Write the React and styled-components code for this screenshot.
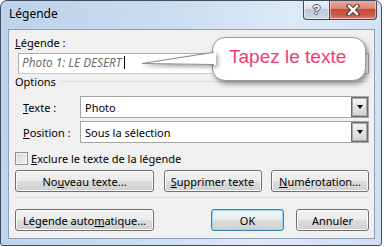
import React from "react";
import styled, { createGlobalStyle } from "styled-components";

const GlobalStyle = createGlobalStyle`
  body {
    margin: 0;
    background: #ffffff;
    font-family: "Noto Sans", "Liberation Sans", sans-serif;
  }
`;

const Window = styled.div`
  width: 382px;
  height: 246px;
  box-sizing: border-box;
  border: 1px solid #3e4d60;
  border-radius: 7px 7px 3px 3px;
  background: linear-gradient(100deg, #bcd2ec 0%, #cadcf1 40%, #dce9f7 70%, #cfe0f3 100%);
  display: flex;
  flex-direction: column;
  overflow: hidden;
`;

const TitleBar = styled.div`
  height: 28px;
  flex-shrink: 0;
  display: flex;
  justify-content: space-between;
  align-items: flex-start;
`;

const Title = styled.div`
  font-size: 12px;
  line-height: 16px;
  padding: 5px 0 0 8px;
  color: #000;
`;

const CaptionButtons = styled.div`
  display: flex;
  margin: -1px 4px 0 0;
`;

const CaptionButton = styled.div`
  width: ${(p) => p.$w}px;
  height: 20px;
  box-sizing: border-box;
  border: 1px solid #3d4a5a;
  border-top: none;
  border-left: ${(p) => (p.$close ? "none" : "1px solid #3d4a5a")};
  border-radius: ${(p) => (p.$close ? "0 0 4px 0" : "0 0 0 4px")};
  display: flex;
  align-items: center;
  justify-content: center;
  background: ${(p) =>
    p.$close
      ? "linear-gradient(#eab0a3 0%, #dc8474 45%, #c44a36 50%, #cf5f4b 85%, #e0907c 100%)"
      : "linear-gradient(#eef3f9 0%, #dae4ef 45%, #bccbdc 50%, #c9d7e6 100%)"};
  box-shadow: inset 0 0 0 1px rgba(255, 255, 255, 0.45);
`;

const HelpGlyph = styled.span`
  font-family: "Liberation Sans", sans-serif;
  font-weight: bold;
  font-size: 13px;
  line-height: 13px;
  color: #fff;
  text-shadow: 1px 0 0 #4a5565, -1px 0 0 #4a5565, 0 1px 0 #4a5565, 0 -1px 0 #4a5565;
`;

const Content = styled.div`
  flex: 1;
  margin: 0 6px 6px 7px;
  border: 1px solid #8e9fb3;
  background: #f0f0f0;
  position: relative;
  padding: 5px 5px 7px 6px;
  display: flex;
  flex-direction: column;
  font-size: 11px;
  line-height: 15px;
  color: #000;
`;

const Label = styled.div`
  height: 15px;
  margin-bottom: ${(p) => p.$mb || 0}px;
`;

const TextBox = styled.div`
  height: 21px;
  box-sizing: border-box;
  margin-left: 3px;
  border: 1px solid #abadb3;
  border-bottom-color: #c9ccd3;
  background: #fff;
  padding: 0 3px;
  display: flex;
  align-items: flex-start;
  font-style: italic;
  font-size: 11.8px;
  line-height: 16px;
  color: #6d6d6d;
`;

const Caret = styled.span`
  display: inline-block;
  width: 1px;
  height: 13px;
  margin: 2px 0 0 2px;
  background: #000;
`;

const GroupHeader = styled.div`
  height: 15px;
  display: flex;
  align-items: center;
  margin-bottom: 7px;
`;

const GroupLine = styled.div`
  flex: 1;
  height: 1px;
  margin: 0 0 0 5px;
  background: #d5dfe5;
`;

const FieldRow = styled.div`
  display: flex;
  align-items: center;
  height: 22px;
  margin: 0 0 ${(p) => p.$mb || 0}px 8px;
`;

const FieldLabel = styled.div`
  width: 57px;
`;

const Select = styled.div`
  flex: 1;
  height: 22px;
  box-sizing: border-box;
  border: 1px solid #a5a5a5;
  background: #fff;
  display: flex;
  align-items: center;
  justify-content: space-between;
  padding-left: 4px;
`;

const DropButton = styled.div`
  width: 17px;
  height: 20px;
  box-sizing: border-box;
  border: 1px solid #6d6d6d;
  box-shadow: inset 0 0 0 1px #a9a9a9;
  background: linear-gradient(#f6f6f6, #e4e4e4 50%, #d2d2d2);
  display: flex;
  align-items: center;
  justify-content: center;

  &::after {
    content: "";
    border-left: 3.5px solid transparent;
    border-right: 3.5px solid transparent;
    border-top: 4px solid #000;
    margin-top: -1px;
  }
`;

const CheckRow = styled.div`
  display: flex;
  align-items: center;
  height: 15px;
  margin: 8px 0 4px 0;
`;

const CheckBox = styled.div`
  width: 13px;
  height: 13px;
  box-sizing: border-box;
  border: 1px solid #8e8f8f;
  background: linear-gradient(135deg, #cfd2d6, #f5f5f5);
  box-shadow: inset 0 0 0 1px #f4f4f4;
  margin-right: 3px;
`;

const ButtonRow = styled.div`
  display: flex;
  justify-content: space-between;
  align-items: center;
  height: 22px;
`;

const Spacer = styled.div`
  flex: 1;
`;

const Button = styled.button`
  width: ${(p) => p.$w}px;
  height: 22px;
  box-sizing: border-box;
  border: 1px solid ${(p) => (p.$default ? "#3c7fb1" : "#707070")};
  border-radius: 3px;
  background: linear-gradient(#f2f2f2 0%, #ebebeb 50%, #dddddd 50%, #cfcfcf 100%);
  box-shadow: inset 0 0 0 1px ${(p) => (p.$default ? "#9bd8f2" : "#fbfbfb")};
  font-family: inherit;
  font-size: 11px;
  line-height: 15px;
  color: #000;
  padding: 0;
  margin-left: ${(p) => p.$ml || 0}px;
`;

const Separator = styled.div`
  height: 1px;
  background: #d5dfe5;
  margin: 5px 0 11px 0;
`;

const Callout = styled.div`
  position: absolute;
  left: 203px;
  top: 7px;
  width: 154px;
  height: 44px;
  box-sizing: border-box;
  border: 1px solid #9a9a9a;
  border-radius: 13px;
  background: #fff;
  box-shadow: 2px 3px 5px rgba(0, 0, 0, 0.4);
  display: flex;
  align-items: center;
  padding: 0 0 5px 16px;
  font-family: "Liberation Sans", Arial, sans-serif;
  font-size: 19px;
  color: #f03c72;
`;

const CalloutTail = styled.svg`
  position: absolute;
  left: 131px;
  top: 20px;
  filter: drop-shadow(2px 2px 2px rgba(0, 0, 0, 0.35));
`;

const Key = styled.u`
  text-decoration: underline;
  text-underline-offset: 1px;
`;

export default function App() {
  return (
    <>
      <GlobalStyle />
      <Window>
        <TitleBar>
          <Title>Légende</Title>
          <CaptionButtons>
            <CaptionButton $w={27}>
              <HelpGlyph>?</HelpGlyph>
            </CaptionButton>
            <CaptionButton $w={47} $close>
              <svg width="14" height="12" viewBox="0 0 14 12">
                <path d="M3 2 L11 10 M11 2 L3 10" stroke="#4b2b25" strokeWidth="4.5" strokeLinecap="square" />
                <path d="M3 2 L11 10 M11 2 L3 10" stroke="#ffffff" strokeWidth="2.5" strokeLinecap="square" />
              </svg>
            </CaptionButton>
          </CaptionButtons>
        </TitleBar>
        <Content>
          <Label $mb={3}>
            <Key>L</Key>égende :
          </Label>
          <TextBox>
            Photo 1: LE DESERT
            <Caret />
          </TextBox>
          <GroupHeader>
            Options
            <GroupLine />
          </GroupHeader>
          <FieldRow $mb={3}>
            <FieldLabel>
              <Key>T</Key>exte :
            </FieldLabel>
            <Select>
              Photo
              <DropButton />
            </Select>
          </FieldRow>
          <FieldRow>
            <FieldLabel>
              <Key>P</Key>osition :
            </FieldLabel>
            <Select>
              Sous la sélection
              <DropButton />
            </Select>
          </FieldRow>
          <CheckRow>
            <CheckBox />
            <span>
              <Key>E</Key>xclure le texte de la légende
            </span>
          </CheckRow>
          <ButtonRow>
            <Button $w={139}>
              No<Key>u</Key>veau texte...
            </Button>
            <Button $w={98}>
              <Key>S</Key>upprimer texte
            </Button>
            <Button $w={98}>
              <Key>N</Key>umérotation...
            </Button>
          </ButtonRow>
          <Separator />
          <ButtonRow>
            <Button $w={139}>
              Légende auto<Key>m</Key>atique...
            </Button>
            <Spacer />
            <Button $w={73} $default>
              OK
            </Button>
            <Button $w={73} $ml={12}>
              Annuler
            </Button>
          </ButtonRow>
          <Callout>Tapez le texte</Callout>
          <CalloutTail width="78" height="20" viewBox="0 0 78 20">
            <polygon points="2,13.5 76,2 76,15 " fill="#ffffff" />
            <polyline points="74,2.3 2,13.5 74,14.5" fill="none" stroke="#8a8a8a" strokeWidth="1" />
          </CalloutTail>
        </Content>
      </Window>
    </>
  );
}
